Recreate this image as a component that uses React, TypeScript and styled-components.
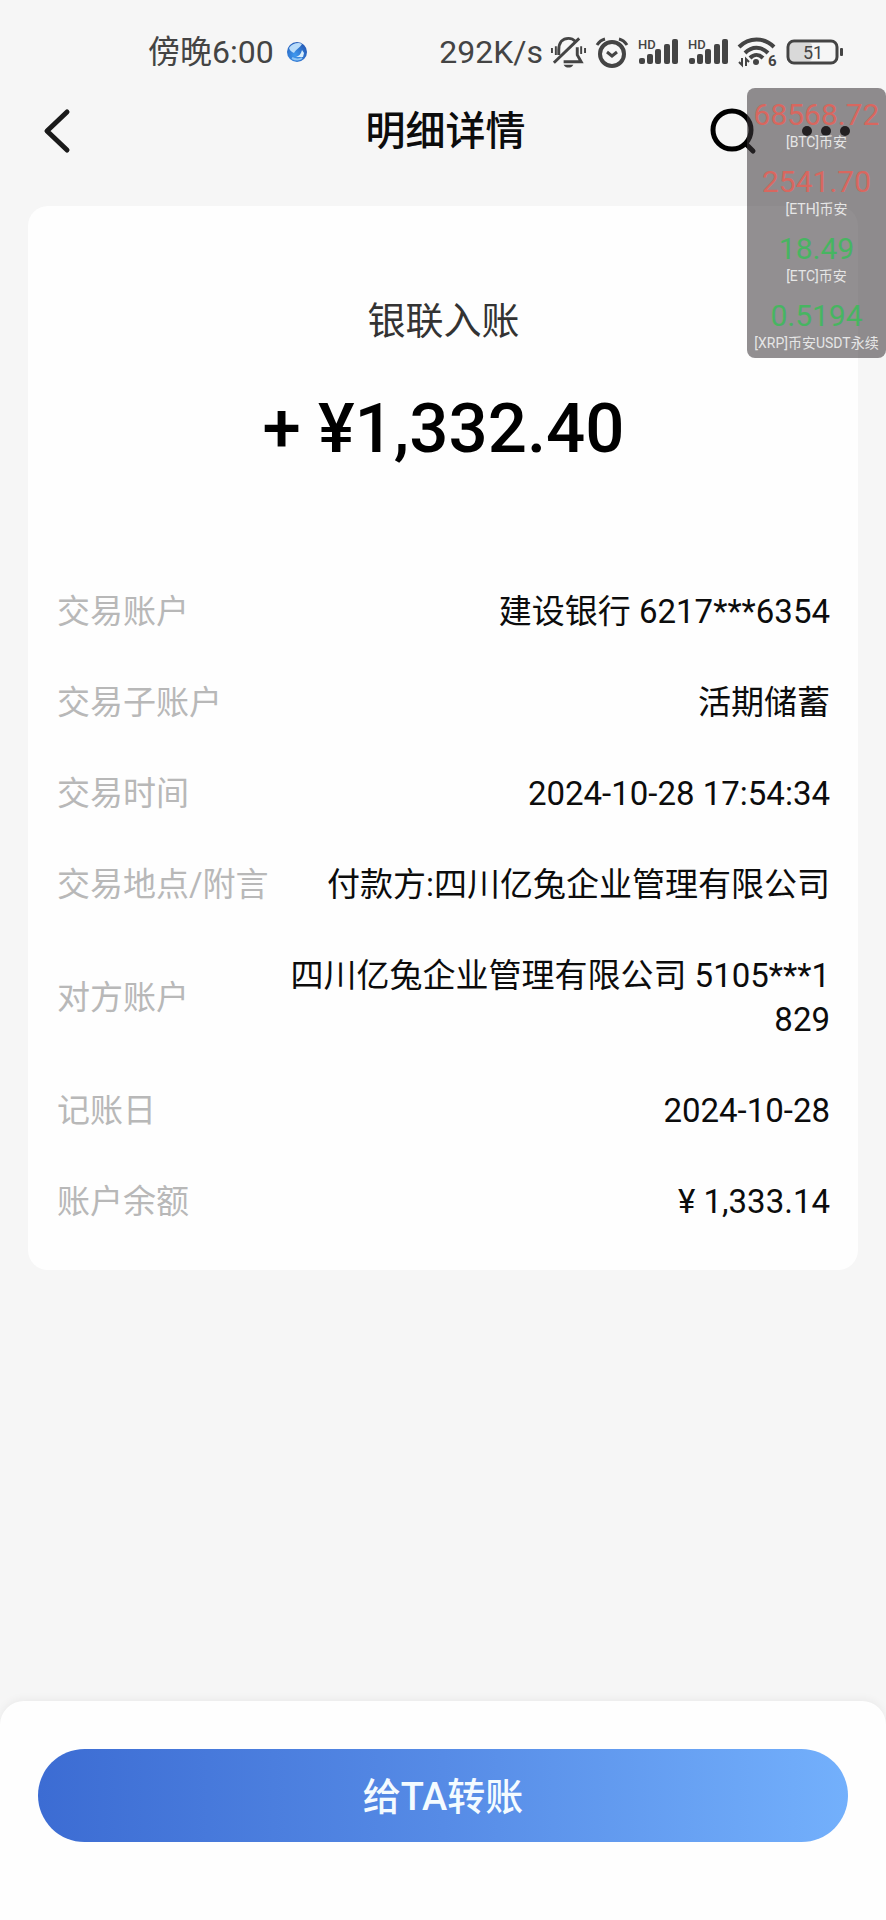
import React from 'react';
import styled, { createGlobalStyle } from 'styled-components';

const GlobalStyle = createGlobalStyle`
  * { box-sizing: border-box; }
  body {
    margin: 0;
    background: #f6f6f6;
    color: #0c0c0c;
    font-family: Roboto, "Noto Sans CJK SC", sans-serif;
  }
  button { font: inherit; color: inherit; border: 0; padding: 0; background: none; cursor: pointer; }
  svg { display: block; overflow: visible; }
`;

const Page = styled.div`
  position: relative;
  display: flex;
  flex-direction: column;
  min-height: 100vh;
`;

const StatusBar = styled.div`
  display: flex;
  justify-content: space-between;
  align-items: center;
  padding: 30px 43px 0 148px;
  font-size: 32px;
  line-height: 44px;
  color: #444;
  white-space: nowrap;
`;

const StatusGroup = styled.div<{ $gap: number }>`
  display: flex;
  align-items: center;
  gap: ${(p) => p.$gap}px;
`;

const Header = styled.header`
  display: grid;
  grid-template-columns: 1fr auto 1fr;
  align-items: center;
  height: 114px;
  padding: 0 35px 0 40px;
`;

const HeaderTitle = styled.h1`
  margin: 0;
  padding-top: 2px;
  font-size: 40px;
  line-height: 56px;
  font-weight: 500;
`;

const HeaderActions = styled.div`
  display: flex;
  justify-content: flex-end;
  align-items: center;
  gap: 44px;
`;

const IconButton = styled.button`
  display: flex;
  align-items: center;
  justify-self: start;
`;

const Main = styled.main`
  padding: 18px 28px;
`;

const Card = styled.section`
  padding: 89px 28px 46px 29px;
  border-radius: 20px;
  background: #fefefe;
`;

const EntryType = styled.h2`
  margin: 0 0 40px;
  font-size: 38px;
  line-height: 52px;
  font-weight: 400;
  text-align: center;
  color: #333;
`;

const Amount = styled.p`
  margin: 0;
  font-size: 69px;
  line-height: 84px;
  font-weight: 500;
  text-align: center;
  color: #000;
`;

const Details = styled.dl`
  display: flex;
  flex-direction: column;
  gap: 47px;
  margin: 119px 0 0;
  font-size: 33px;
  line-height: 44px;
`;

const DetailRow = styled.div`
  display: flex;
  justify-content: space-between;
  align-items: center;
`;

const DetailLabel = styled.dt`
  color: #b8b8b8;
  white-space: nowrap;
`;

const DetailValue = styled.dd`
  max-width: 71%;
  margin: 0;
  text-align: right;
  word-break: break-all;
`;

const Footer = styled.footer`
  margin-top: auto;
  padding: 48px 38px 78px;
  border-radius: 24px 24px 0 0;
  background: #fefefe;
  box-shadow: 0 -2px 8px rgba(0, 0, 0, 0.05);
`;

const TransferButton = styled.button`
  width: 100%;
  height: 93px;
  padding-bottom: 4px;
  border-radius: 47px;
  background: linear-gradient(90deg, #3c6cd3, #568be6 50%, #73b0fc);
  color: #f4fbff;
  font-size: 38px;
  font-weight: 500;
`;

const Ticker = styled.aside`
  position: absolute;
  top: 88px;
  right: 0;
  display: flex;
  flex-direction: column;
  align-items: center;
  width: 139px;
  padding: 9px 0;
  border-radius: 8px;
  background: rgba(60, 56, 58, 0.56);
  white-space: nowrap;
`;

const TickerItem = styled.div`
  display: flex;
  flex-direction: column;
  align-items: center;
  height: 67px;
  &:last-child { height: 51px; }
`;

const Price = styled.span<{ $up: boolean }>`
  font-size: 30px;
  line-height: 36px;
  color: ${(p) => (p.$up ? '#47b561' : '#d8675f')};
`;

const Pair = styled.span`
  font-size: 14px;
  line-height: 18px;
  color: #e6e6e6;
`;

const Globe = () => (
  <svg width="22" height="22" viewBox="0 0 22 22" aria-hidden="true">
    <defs>
      <radialGradient id="globe" cx="0.4" cy="0.65" r="0.7">
        <stop offset="0" stopColor="#3f9af0" />
        <stop offset="1" stopColor="#2458b4" />
      </radialGradient>
    </defs>
    <circle cx="11" cy="11" r="10" fill="url(#globe)" />
    <path d="M3 7C6 2 13 1 16 3C14 7 10 8 8 12C6 11 4 10 3 7Z" fill="#b9dcfa" />
    <path d="M10 16C13 15 15 13 16 9L18 12L17 16Z" fill="#d9eefc" />
    <path d="M6 17C10 19 13 19 16 17" fill="none" stroke="#8cc4f5" strokeWidth="2" />
  </svg>
);

const MutedBell = () => (
  <svg width="37" height="34" viewBox="0 0 38 34" fill="none" stroke="#444" strokeWidth="3" aria-hidden="true">
    <path d="M9 20V15C9 7 13 3 19 3C22 3 24 4 26 6M28 12V20L32 27H14" />
    <path d="M4 28L30 3" />
    <path d="M14 30H24C22 34 16 34 14 30Z" fill="#444" stroke="none" />
    <path d="M2 13V18M6 11V20M32 11V19M36 13V18" strokeWidth="2" />
  </svg>
);

const AlarmClock = () => (
  <svg width="34" height="32" viewBox="0 0 34 32" fill="none" stroke="#444" strokeWidth="4" aria-hidden="true">
    <circle cx="17" cy="18" r="12" />
    <path d="M12 16L17 20L22 16" strokeWidth="3" />
    <path d="M2 9C4 6 6 4 10 3M32 9C30 6 28 4 24 3" strokeWidth="3" />
  </svg>
);

const Signal = () => (
  <svg width="42" height="34" viewBox="0 0 42 34" fill="#444" aria-hidden="true">
    <text x="1" y="14" fontSize="13" fontWeight="500" fontFamily="Roboto, sans-serif">HD</text>
    <rect x="2" y="23" width="6" height="6" rx="2" />
    <rect x="10" y="19" width="6" height="10" rx="2" />
    <rect x="18" y="14" width="6" height="15" rx="2" />
    <rect x="27" y="9" width="6" height="20" rx="2" />
    <rect x="35" y="4" width="6" height="25" rx="2" />
  </svg>
);

const Wifi = () => (
  <svg width="40" height="32" viewBox="0 0 40 32" fill="none" stroke="#444" strokeWidth="4" aria-hidden="true">
    <path d="M2 11C12 1 27 1 37 11" />
    <path d="M8 17C15 10 24 10 31 17" />
    <path d="M13 22C17 18 22 18 26 22" />
    <circle cx="19" cy="26" r="3" fill="#444" stroke="none" />
    <path d="M5 22V29L2 26M9 30V23L12 26" strokeWidth="2" />
    <text x="31" y="30" fontSize="15" fontWeight="700" fill="#444" stroke="none" fontFamily="Roboto, sans-serif">6</text>
  </svg>
);

const Battery = () => (
  <svg width="58" height="28" viewBox="0 0 58 28" aria-hidden="true">
    <rect x="5" y="5" width="22" height="18" rx="3" fill="#d9d9d9" />
    <rect x="3" y="3" width="49" height="22" rx="6" fill="none" stroke="#444" strokeWidth="3" />
    <rect x="55" y="10" width="3" height="8" rx="1" fill="#444" />
    <text x="28" y="21" fontSize="18" textAnchor="middle" fill="#444" fontFamily="Roboto, sans-serif">51</text>
  </svg>
);

const details = [
  ['交易账户', '建设银行 6217***6354'],
  ['交易子账户', '活期储蓄'],
  ['交易时间', '2024-10-28 17:54:34'],
  ['交易地点/附言', '付款方:四川亿兔企业管理有限公司'],
  ['对方账户', '四川亿兔企业管理有限公司 5105***1829'],
  ['记账日', '2024-10-28'],
  ['账户余额', '¥ 1,333.14'],
];

const prices = [
  { price: '68568.72', pair: '[BTC]币安', up: false },
  { price: '2541.70', pair: '[ETH]币安', up: false },
  { price: '18.49', pair: '[ETC]币安', up: true },
  { price: '0.5194', pair: '[XRP]币安USDT永续', up: true },
];

export default function App() {
  return (
    <Page>
      <GlobalStyle />
      <StatusBar>
        <StatusGroup $gap={12}>
          <span>傍晚6:00</span>
          <Globe />
        </StatusGroup>
        <StatusGroup $gap={8}>
          <StatusGroup $gap={7}>
            <span>292K/s</span>
            <MutedBell />
          </StatusGroup>
          <AlarmClock />
          <Signal />
          <Signal />
          <Wifi />
          <Battery />
        </StatusGroup>
      </StatusBar>

      <Header>
        <IconButton type="button" aria-label="返回">
          <svg width="32" height="48" viewBox="0 0 32 48" fill="none" stroke="#1a1a1a" strokeWidth="5" strokeLinecap="round" strokeLinejoin="round">
            <path d="M27 5L7 24L27 43" />
          </svg>
        </IconButton>
        <HeaderTitle>明细详情</HeaderTitle>
        <HeaderActions>
          <IconButton type="button" aria-label="搜索">
            <svg width="48" height="48" viewBox="0 0 48 48" fill="none" stroke="#000" strokeWidth="5" strokeLinecap="round">
              <circle cx="23" cy="23" r="19" />
              <path d="M37 37L44 44" />
            </svg>
          </IconButton>
          <IconButton type="button" aria-label="更多">
            <svg width="50" height="12" viewBox="0 0 50 12" fill="#000">
              <circle cx="6" cy="6" r="5" />
              <circle cx="25" cy="6" r="5" />
              <circle cx="44" cy="6" r="5" />
            </svg>
          </IconButton>
        </HeaderActions>
      </Header>

      <Main>
        <Card>
          <EntryType>银联入账</EntryType>
          <Amount>+ ¥1,332.40</Amount>
          <Details>
            {details.map(([label, value]) => (
              <DetailRow key={label}>
                <DetailLabel>{label}</DetailLabel>
                <DetailValue>{value}</DetailValue>
              </DetailRow>
            ))}
          </Details>
        </Card>
      </Main>

      <Footer>
        <TransferButton type="button">给TA转账</TransferButton>
      </Footer>

      <Ticker>
        {prices.map((item) => (
          <TickerItem key={item.pair}>
            <Price $up={item.up}>{item.price}</Price>
            <Pair>{item.pair}</Pair>
          </TickerItem>
        ))}
      </Ticker>
    </Page>
  );
}
